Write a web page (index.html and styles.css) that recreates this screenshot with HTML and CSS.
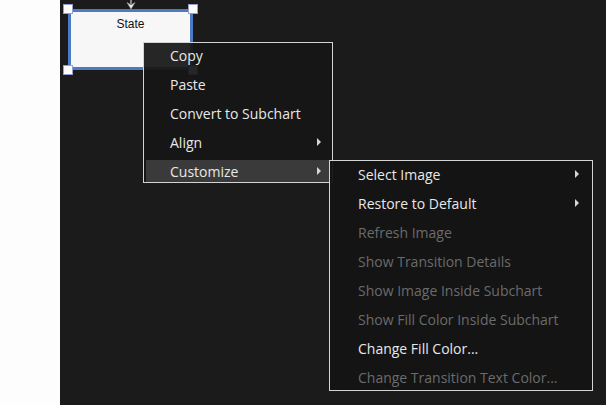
FILE: index.html
```html
<!DOCTYPE html>
<html lang="en">
<head>
    <meta charset="UTF-8">
    <title>Chart context menu</title>
    <link rel="stylesheet" href="styles.css">
</head>
<body>

<div class="side"></div>

<div class="canvas">

    <!-- transicion de entrada -->
    <svg class="arrow-in" width="10" height="10" viewBox="0 0 10 10">
        <path d="M5 0 L5 4" stroke="#cfcfcf" stroke-width="1.2"/>
        <path d="M1 2.5 L5 9 L9 2.5 L5 5 Z" fill="#f2f2f2" stroke="#a0a0a0" stroke-width="0.6"/>
    </svg>

    <!-- estado seleccionado -->
    <div class="state">
        <div class="state-name">State</div>
        <span class="handle h-tl"></span>
        <span class="handle h-tr"></span>
        <span class="handle h-bl"></span>
        <span class="handle h-br"></span>
    </div>

    <!-- menu contextual -->
    <div class="menu main-menu">
        <div class="item">Copy</div>
        <div class="item">Paste</div>
        <div class="item">Convert to Subchart</div>
        <div class="item sub">Align</div>
        <div class="item sub active">Customize</div>
    </div>

    <div class="menu sub-menu">
        <div class="item sub">Select Image</div>
        <div class="item sub">Restore to Default</div>
        <div class="item disabled">Refresh Image</div>
        <div class="item disabled">Show Transition Details</div>
        <div class="item disabled">Show Image Inside Subchart</div>
        <div class="item disabled">Show Fill Color Inside Subchart</div>
        <div class="item">Change Fill Color...</div>
        <div class="item disabled">Change Transition Text Color...</div>
    </div>

</div>

</body>
</html>
```

FILE: styles.css
```css
body {
    margin: 0;
    padding: 0;
    display: flex;
    width: 606px;
    height: 405px;
    overflow: hidden;
    font-family: "Open Sans", "Noto Sans", sans-serif;
}

.side {
    width: 60px;
    background-color: #fdfdfd;
}

.canvas {
    flex: 1;
    position: relative;
    background-color: #1b1b1b;
}

.arrow-in {
    position: absolute;
    left: 66px;
    top: 0;
}

/* estado */
.state {
    position: absolute;
    left: 8px;
    top: 9px;
    width: 119px;
    height: 55px;
    border: 3px solid #4a7bc4;
    background-color: #f7f7f7;
}

.state-name {
    text-align: center;
    font-family: "Liberation Sans", Arial, sans-serif;
    font-size: 12px;
    color: #111;
    margin-top: 5px;
}

.handle {
    position: absolute;
    width: 8px;
    height: 8px;
    background-color: #fff;
    border: 1px solid #9c9ccf;
}

.h-tl { left: -8px; top: -8px; }
.h-tr { right: -8px; top: -8px; }
.h-bl { left: -8px; bottom: -8px; }
.h-br { right: -8px; bottom: -8px; }

/* menus */
.menu {
    position: absolute;
    display: flex;
    flex-direction: column;
    gap: 7px;
    background-color: rgba(22, 22, 22, 0.93);
    border: 1px solid #d4d4d4;
}

.main-menu {
    left: 83px;
    top: 42px;
    width: 183px;
    padding: 1px 3px 0 2px;
}

.sub-menu {
    left: 269px;
    top: 160px;
    width: 257px;
    padding: 2px 3px 2px 2px;
    background-color: rgba(20, 20, 20, 0.95);
}

.item {
    height: 22px;
    line-height: 24px;
    font-size: 14px;
    color: #e8e8e8;
    padding-left: 24px;
    position: relative;
}

.sub-menu .item {
    padding-left: 26px;
}

.item.active {
    background-color: #3a3a3a;
}

.item.disabled {
    color: #6b6b6b;
}

.item.sub::after {
    content: "";
    position: absolute;
    right: 8px;
    top: 7px;
    border-left: 4px solid #d6d6d6;
    border-top: 4px solid transparent;
    border-bottom: 4px solid transparent;
}

.sub-menu .item.sub::after {
    right: 10px;
}
```
